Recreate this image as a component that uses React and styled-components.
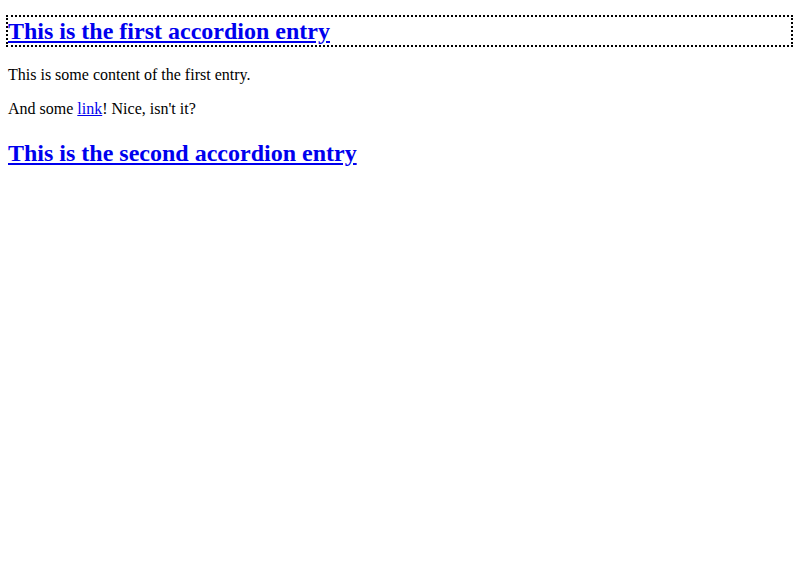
import React, { useState } from 'react';
import styled, { createGlobalStyle } from 'styled-components';

const GlobalStyle = createGlobalStyle`
    body {
        margin: 0;
        padding: 8px;
        background: #fff;
        color: #000;
        font-family: "Liberation Serif", "Times New Roman", serif;
        font-size: 16px;
    }
`

const AccordionWrap = styled.div`
    display: flow-root;
`
const Header = styled.h2`
    font-size: 24px;
    font-weight: bold;
    margin: ${props => props.first ? '9px' : '21px'} 0 21px;
    padding-top: 1px;
    outline: ${props => props.active ? '2px dotted #000' : 'none'};
    cursor: pointer;
`
const HeaderLink = styled.a`
    color: #0000ee;
    text-decoration: underline;
`
const Panel = styled.div`
    display: ${props => props.open ? 'block' : 'none'};
`
const Paragraph = styled.p`
    margin: 16px 0;
`
const InlineLink = styled.a`
    color: #0000ee;
    text-decoration: underline;
`

const entries = [
    {
        title: 'This is the first accordion entry',
        content: (
            <>
                <Paragraph>This is some content of the first entry.</Paragraph>
                <Paragraph>And some <InlineLink href="#">link</InlineLink>! Nice, isn't it?</Paragraph>
            </>
        ),
    },
    {
        title: 'This is the second accordion entry',
        content: <Paragraph>This is some content of the second entry.</Paragraph>,
    },
];

const App = () => {
    const [open, setOpen] = useState(0);

    return (
        <AccordionWrap>
            <GlobalStyle />
            {entries.map((item, index) => (
                <React.Fragment key={index}>
                    <Header first={index === 0} active={open === index} onClick={() => setOpen(index)}>
                        <HeaderLink href="#" onClick={e => e.preventDefault()}>{item.title}</HeaderLink>
                    </Header>
                    <Panel open={open === index}>{item.content}</Panel>
                </React.Fragment>
            ))}
        </AccordionWrap>
    );
};

export default App;
